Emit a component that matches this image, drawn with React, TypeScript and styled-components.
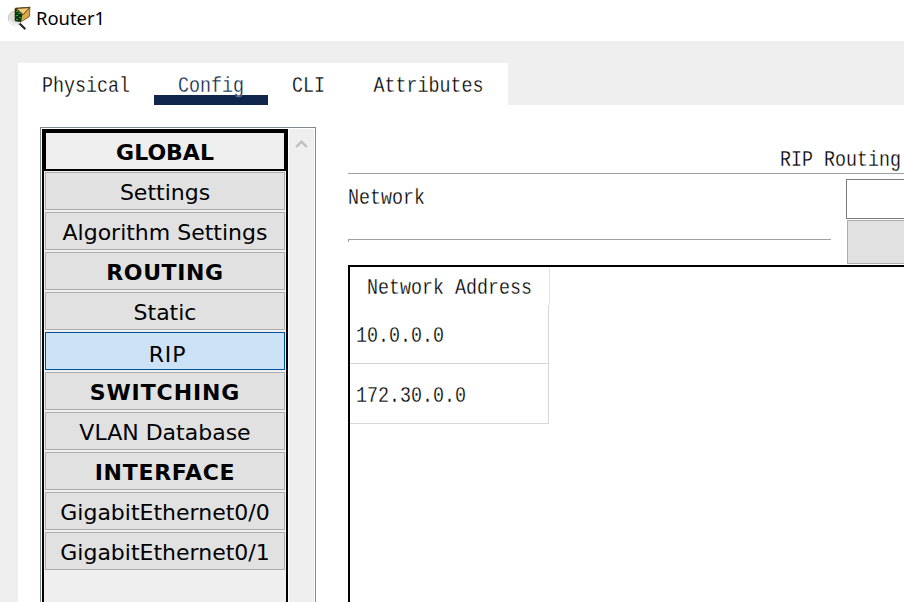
import React from "react";
import styled, { createGlobalStyle } from "styled-components";

const GlobalStyle = createGlobalStyle`
  * { box-sizing: border-box; }
  html, body { margin: 0; background: #efefef; overflow: hidden; }
`;

const Window = styled.div`
  width: 904px;
  height: 602px;
  overflow: hidden;
  display: flex;
  flex-direction: column;
  background: #efefef;
  color: #000;
`;

const TitleBar = styled.header`
  height: 41px;
  flex: none;
  display: flex;
  align-items: flex-start;
  padding: 5px 0 0 7px;
  background: #fff;
`;

const Title = styled.h1`
  margin: 0 0 0 5px;
  font: 400 18.4px/25px "Noto Sans", sans-serif;
  white-space: nowrap;
`;

const Label = styled.span<{ $color?: string }>`
  display: block;
  font: 400 18.33px/22px "Liberation Mono", monospace;
  white-space: pre;
  color: ${(p) => p.$color ?? "#000"};
  -webkit-text-stroke: 0.22px #fff;
  transform: translateY(2px) scaleY(1.22);
`;

const Tabs = styled.nav`
  width: 490px;
  height: 42px;
  flex: none;
  display: flex;
  margin: 22px 0 0 18px;
  background: #fff;
`;

const Tab = styled.div<{ $width: number; $active?: boolean }>`
  width: ${(p) => p.$width}px;
  padding-top: 12px;
  display: flex;
  justify-content: center;
  background: ${(p) =>
    p.$active ? "linear-gradient(#10264a, #10264a) bottom / 100% 10px no-repeat" : "none"};
`;

const Page = styled.main`
  flex: 1;
  min-height: 0;
  display: flex;
  margin-left: 18px;
  padding: 22px 0 0 22px;
  background: #fff;
`;

const Sidebar = styled.aside`
  width: 276px;
  flex: none;
  display: flex;
  padding: 1px 1px 0;
  border: 1px solid #828790;
  border-bottom: 0;
`;

const Menu = styled.div`
  width: 246px;
  border: 2px solid #000;
  border-bottom: 0;
  background: #efefef;
`;

const MenuHeading = styled.div`
  height: 40px;
  display: flex;
  align-items: center;
  justify-content: center;
  padding-top: 3px;
  border: 2px solid #000;
  font: 700 22px/26px "DejaVu Sans", Verdana, sans-serif;
`;

const MenuButton = styled.button<{ $bold?: boolean; $selected?: boolean; $tracking?: number }>`
  display: flex;
  width: 240px;
  height: 38px;
  margin: 0 1px 2px;
  padding: ${(p) => (p.$selected ? "7px 0 0 5px" : "4px 0 0")};
  align-items: center;
  justify-content: center;
  border: 1px solid ${(p) => (p.$selected ? "#00549c" : "#adadad")};
  background: ${(p) => (p.$selected ? "#cce3f7" : "#e1e1e1")};
  color: #000;
  font: ${(p) => (p.$bold ? 700 : 400)} 22px/26px "DejaVu Sans", Verdana, sans-serif;
  letter-spacing: ${(p) => p.$tracking ?? 0}px;
  white-space: nowrap;
`;

const MenuItems = styled.div`
  padding-top: 1px;
`;

const ScrollTrack = styled.div`
  width: 25px;
  margin-left: 1px;
  padding: 7px 0 0 6px;
  background: #efefef;
`;

const Content = styled.section`
  flex: 1;
  min-width: 0;
  display: flex;
  flex-direction: column;
  margin-left: 32px;
`;

const SectionTitle = styled.div`
  height: 47px;
  flex: none;
  display: flex;
  justify-content: flex-end;
  padding: 21px 3px 0 0;
  border-bottom: 1px solid #a0a0a0;
`;

const FormRow = styled.div`
  height: 91px;
  flex: none;
  display: flex;
  justify-content: space-between;
`;

const Field = styled.div`
  width: 483px;
  padding-top: 12px;
`;

const Rule = styled.div`
  height: 3px;
  margin-top: 31px;
  border-top: 1px solid #a0a0a0;
  border-left: 1px solid #a0a0a0;
`;

const Controls = styled.div`
  width: 58px;
  padding-top: 5px;
`;

const NetworkInput = styled.input`
  display: block;
  width: 58px;
  height: 40px;
  padding: 0;
  border: 1px solid #7a7a7a;
  border-right: 0;
  border-radius: 0;
  background: #fff;
`;

const AddButton = styled.button`
  display: block;
  width: 57px;
  height: 44px;
  margin: 1px 0 0 1px;
  border: 1px solid #adadad;
  border-right: 0;
  background: #e1e1e1;
`;

const Table = styled.div`
  flex: 1;
  border: solid #000;
  border-width: 2px 0 0 2px;
`;

const TableHeader = styled.div`
  width: 200px;
  height: 38px;
  padding: 9px 0 0 17px;
  border-right: 1px solid #e5e5e5;
`;

const TableCell = styled.div<{ $height: number }>`
  width: 199px;
  height: ${(p) => p.$height}px;
  display: flex;
  align-items: center;
  padding: 2px 0 0 6px;
  border: solid #d8d8d8;
  border-width: 0 1px 1px 0;
`;

const RouterIcon = () => (
  <svg width="24" height="25" viewBox="0 -1 24 25">
    <path d="M12.5 17.5l5.2 5" stroke="#252525" strokeWidth="2.2" strokeLinecap="round" />
    <circle cx="8.2" cy="12" r="7" fill="#dededb" stroke="#c2c2bf" strokeWidth="0.8" />
    <path d="M2.4 14a6.4 6.4 0 0 0 8 4" stroke="#f7f7f5" strokeWidth="1.6" fill="none" />
    <path d="M8 2.3L23 1.2l-.7 9.5L14 15.8 8 14.7z" fill="#d9a94d" stroke="#6a4a1b" strokeWidth="0.8" />
    <path d="M9 2.4L22.6 1.6 16.2 8.6z" fill="#f5cd79" stroke="#3a2a10" strokeWidth="0.9" />
    <path d="M8 2.3l7.4 6.4L14 15.8 8 15z" fill="#0b3314" />
    <path d="M9 5.5h2M11 7.5h2M9 9.5h2M12 11.5h2M9 13.5h2" stroke="#19b535" strokeWidth="1.2" />
  </svg>
);

const menuItems = [
  { label: "Settings" },
  { label: "Algorithm Settings" },
  { label: "ROUTING", bold: true, tracking: 0.6 },
  { label: "Static" },
  { label: "RIP", selected: true, tracking: 0.8 },
  { label: "SWITCHING", bold: true, tracking: 0.9 },
  { label: "VLAN Database" },
  { label: "INTERFACE", bold: true, tracking: 0.7 },
  { label: "GigabitEthernet0/0" },
  { label: "GigabitEthernet0/1" },
];

export default function App() {
  return (
    <Window>
      <GlobalStyle />
      <TitleBar>
        <RouterIcon />
        <Title>Router1</Title>
      </TitleBar>
      <Tabs>
        <Tab $width={136}><Label>Physical</Label></Tab>
        <Tab $width={114} $active><Label $color="#10264a">Config</Label></Tab>
        <Tab $width={81}><Label>CLI</Label></Tab>
        <Tab $width={159}><Label>Attributes</Label></Tab>
      </Tabs>
      <Page>
        <Sidebar>
          <Menu>
            <MenuHeading>GLOBAL</MenuHeading>
            <MenuItems>
              {menuItems.map((m) => (
                <MenuButton
                  key={m.label}
                  $bold={m.bold}
                  $selected={m.selected}
                  $tracking={m.tracking}
                >
                  {m.label}
                </MenuButton>
              ))}
            </MenuItems>
          </Menu>
          <ScrollTrack>
            <svg width="13" height="12" viewBox="0 0 13 12">
              <path d="M1.2 9L6.5 3.7 11.8 9" fill="none" stroke="#bfbfbf" strokeWidth="2.4" />
            </svg>
          </ScrollTrack>
        </Sidebar>
        <Content>
          <SectionTitle><Label>RIP Routing</Label></SectionTitle>
          <FormRow>
            <Field>
              <Label>Network</Label>
              <Rule />
            </Field>
            <Controls>
              <NetworkInput aria-label="Network" />
              <AddButton />
            </Controls>
          </FormRow>
          <Table>
            <TableHeader><Label>Network Address</Label></TableHeader>
            <TableCell $height={59}><Label>10.0.0.0</Label></TableCell>
            <TableCell $height={60}><Label>172.30.0.0</Label></TableCell>
          </Table>
        </Content>
      </Page>
    </Window>
  );
}
